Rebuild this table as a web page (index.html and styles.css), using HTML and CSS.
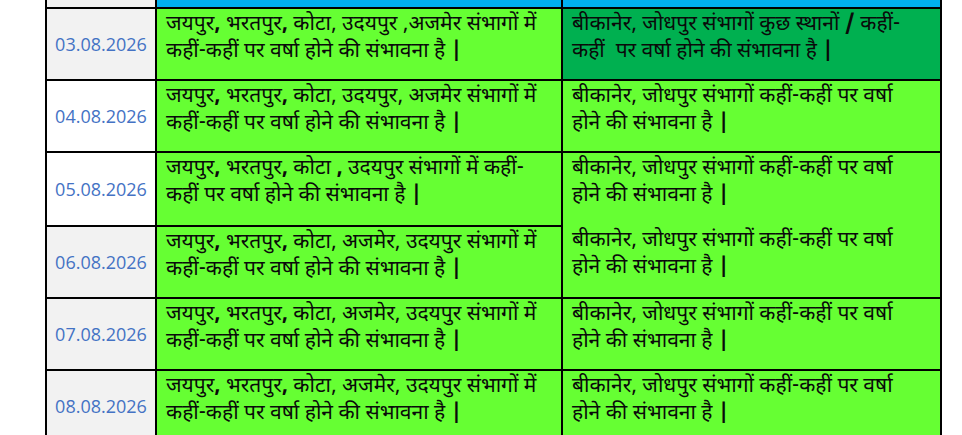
FILE: index.html
```html
<!DOCTYPE html>
<html lang="hi">
<head>
<meta charset="utf-8">
<title>वर्षा पूर्वानुमान</title>
<link rel="stylesheet" href="styles.css">
</head>
<body>
<table class="forecast">
  <colgroup>
    <col class="c-date">
    <col class="c-east">
    <col class="c-west">
  </colgroup>
  <tr class="head">
    <td class="date alt"></td>
    <td class="blue"></td>
    <td class="blue"></td>
  </tr>
  <tr>
    <td class="date alt">03.08.2026</td>
    <td class="txt">जयपुर<b>,</b> भरतपुर<b>,</b> कोटा, उदयपुर ,अजमेर संभागों में कहीं-कहीं पर वर्षा होने की संभावना है <b>|</b></td>
    <td class="txt dark">बीकानेर, जोधपुर संभागों कुछ स्थानों <b>/</b> कहीं-कहीं&nbsp; पर वर्षा होने की संभावना है <b>|</b></td>
  </tr>
  <tr>
    <td class="date">04.08.2026</td>
    <td class="txt">जयपुर<b>,</b> भरतपुर<b>,</b> कोटा, उदयपुर, अजमेर संभागों में कहीं-कहीं पर वर्षा होने की संभावना है <b>|</b></td>
    <td class="txt">बीकानेर, जोधपुर संभागों कहीं-कहीं पर वर्षा होने की संभावना है <b>|</b></td>
  </tr>
  <tr class="tall">
    <td class="date">05.08.2026</td>
    <td class="txt">जयपुर<b>,</b> भरतपुर<b>,</b> कोटा <b>,</b> उदयपुर संभागों में कहीं-कहीं पर वर्षा होने की संभावना है <b>|</b></td>
    <td class="txt" rowspan="2">
      <p class="para">बीकानेर, जोधपुर संभागों कहीं-कहीं पर वर्षा होने की संभावना है <b>|</b></p>
      <p class="para second">बीकानेर, जोधपुर संभागों कहीं-कहीं पर वर्षा होने की संभावना है <b>|</b></p>
    </td>
  </tr>
  <tr>
    <td class="date alt">06.08.2026</td>
    <td class="txt">जयपुर<b>,</b> भरतपुर<b>,</b> कोटा, अजमेर, उदयपुर संभागों में कहीं-कहीं पर वर्षा होने की संभावना है <b>|</b></td>
  </tr>
  <tr>
    <td class="date alt">07.08.2026</td>
    <td class="txt">जयपुर<b>,</b> भरतपुर<b>,</b> कोटा, अजमेर, उदयपुर संभागों में कहीं-कहीं पर वर्षा होने की संभावना है <b>|</b></td>
    <td class="txt">बीकानेर, जोधपुर संभागों कहीं-कहीं पर वर्षा होने की संभावना है <b>|</b></td>
  </tr>
  <tr>
    <td class="date alt">08.08.2026</td>
    <td class="txt">जयपुर<b>,</b> भरतपुर<b>,</b> कोटा, अजमेर, उदयपुर संभागों में कहीं-कहीं पर वर्षा होने की संभावना है <b>|</b></td>
    <td class="txt">बीकानेर, जोधपुर संभागों कहीं-कहीं पर वर्षा होने की संभावना है <b>|</b></td>
  </tr>
</table>
</body>
</html>
```
FILE: styles.css
```css
html, body {
  margin: 0;
  padding: 0;
  background: #ffffff;
}

.forecast {
  border-collapse: collapse;
  margin-left: 45px;
  table-layout: fixed;
  width: 895px;
}

.c-date { width: 110px; }
.c-east { width: 406px; }
.c-west { width: 379px; }

.forecast td {
  border: 2px solid #000;
  padding: 0;
  height: 70px;
}

.forecast tr.head td {
  height: 7px;
  border-top: none;
}

.forecast tr.tall td.date {
  height: 72px;
}

.forecast td.date {
  background: #ffffff;
  color: #4472c4;
  font-family: "Open Sans", "Noto Sans", sans-serif;
  font-size: 18px;
  text-align: center;
  vertical-align: middle;
}

.forecast td.date.alt {
  background: #f2f2f2;
}

.forecast td.blue {
  background: #00b0f0;
}

.forecast td.txt {
  background: #66ff33;
  color: #0a0a0a;
  font-family: "Noto Sans Devanagari", "Noto Sans", "Lohit Devanagari", sans-serif;
  font-size: 21px;
  line-height: 27px;
  vertical-align: top;
  height: 67px;
  padding: 3px 18px 0 9px;
}

.forecast td.txt.dark {
  background: #00b050;
}

.para {
  margin: 0;
}

.para.second {
  margin-top: 18px;
}

b {
  font-weight: 700;
}
```
